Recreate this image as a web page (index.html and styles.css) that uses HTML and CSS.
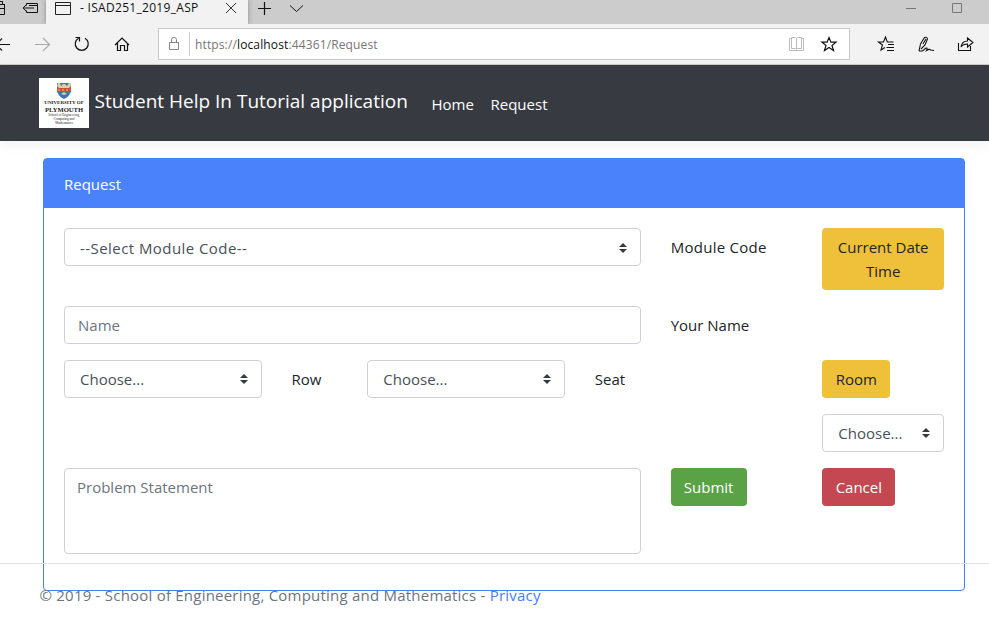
FILE: index.html
```
<!DOCTYPE html>
<html lang="en">
<head>
<meta charset="utf-8">
<title>- ISAD251_2019_ASP</title>
<link rel="stylesheet" href="styles.css">
</head>
<body>
<div class="tabs">
  <svg class="tabs-left" width="46" height="24" fill="none" stroke="#111"><path d="M0 4.500H5M4.500 4V14.500H0M0 8.500H4M0 1.500H2.500V4"/><path d="M26.500 5.500V3.500H37.500V12.500H26.500V10.500M29 5.500H37M34 8H23M26 5L23 8L26 11"/></svg>
  <div class="tab">
    <svg width="16" height="14" fill="none" stroke="#222"><path d="M.5 1.500H15.500V13.500H.5ZM.5 4.500H15.500"/></svg>
    <span class="tab-title">- ISAD251_2019_ASP</span>
    <svg class="tab-close" width="12" height="12" fill="none" stroke="#333"><path d="M1 1L11 11M11 1L1 11"/></svg>
  </div>
  <svg class="tabs-add" width="60" height="24" fill="none" stroke="#111"><path d="M10 8.500H23M16.500 2V15" stroke-width="1.200"/><path d="M42 5.500L48.500 11.500L55 5.500"/></svg>
  <svg class="window" width="88" height="24" fill="none" stroke="#777"><path d="M5 8.500H15M51.500 3.500H60.500V12.500H51.500Z"/></svg>
</div>
<div class="toolbar">
  <svg class="tool-left" width="158" height="40" fill="none" stroke="#111" stroke-width="1.200">
    <path d="M-4 20.500H10M-4 20.500L2 14.500M-4 20.500L2 26.500"/>
    <path stroke="#aaa" d="M35 20.500H49M43 14L49.500 20.500L43 27"/>
    <path d="M85 14.200A6.500 6.500 0 1 1 78.500 14.200M75.500 13.500H79.500V17.500"/>
    <path d="M115 21L122 14L129 21M117.500 19V26.500H120.500V21.500H124.500V26.500H127.500V19"/>
  </svg>
  <div class="address">
    <svg width="12" height="16" fill="none" stroke="#888"><path d="M1.500 6.500H10.500V13.500H1.500ZM3.500 6V3.500Q3.500 1.500 6 1.500Q8.500 1.500 8.500 3.500V6"/></svg>
    <span class="url">https://<b>localhost</b>:44361/Request</span>
    <svg width="51" height="20" fill="none"><path stroke="#bbb" d="M3 4.500H1.500V16.500H15.500V4.500H14M3.500 3.500H7.500L8.500 4.500L9.500 3.500H13.500V14.500H9.500L8.500 15.500L7.500 14.500H3.500ZM8.500 4V15"/><path stroke="#111" stroke-width="1.200" d="M41 3.500L42.900 8.200H48L44 11.500L45.500 16.500L41 13.500L36.500 16.500L38 11.500L34 8.200H39.100Z"/></svg>
  </div>
  <svg class="tool-right" width="139" height="40" fill="none" stroke="#111" stroke-width="1.100">
    <path d="M35 23.500L31 26L32.500 21L28.500 18H33.500L35.500 13L37.300 18H43.500M38 20.500H44M36.500 23.500H44M37 26.500H44"/>
    <path d="M69 27L70.500 20L74.500 13.500Q77 12.500 77.500 15L75 21L71 25M73 20L76 15M69 27H72.500L76 24Q78 23.500 76.500 26.500Q79.500 24.500 80.500 26L84 26.500"/>
    <path d="M108.500 19V26.500H120.500V22M111 23Q112 17 117.500 17V14L123 18.500L117.500 23V20Q113 20 111 23Z"/>
  </svg>
</div>
<header class="navbar">
  <div class="logo">
    <svg width="14" height="17"><path fill="#3b73b8" d="M0 1H14V9Q13 14 7 17Q1 14 0 9Z"/><path fill="#e3cf8c" d="M1 1H3L4 4L6 2H8L10 4L12 1H14V4L12 6H2L0 4Z"/><path fill="#cf4b45" d="M0 6H14V10H0Z"/><path stroke="#f0c75e" stroke-dasharray="2 2" d="M1 8H13"/><path fill="#e3cf8c" d="M4 12L7 10L10 12L7 13Z"/></svg>
    <span class="logo-a">UNIVERSITY OF</span>
    <span class="logo-b">PLYMOUTH</span>
    <span class="logo-c">School of Engineering,<br>Computing and<br>Mathematics</span>
  </div>
  <a class="brand">Student Help In Tutorial application</a>
  <a class="nav-home">Home</a>
  <a class="nav-request">Request</a>
</header>
<main class="card">
  <div class="card-header"><span>Request</span></div>
  <div class="form">
    <div class="control select wide s8"><span>--Select Module Code--</span><svg class="arrows" width="8" height="10"><path d="M0 4L4 0L8 4ZM0 6L4 10L8 6Z"/></svg></div>
    <label class="s2"><span class="t-module">Module Code</span></label>
    <button class="btn yellow s2 full"><span>Current Date<br>Time</span></button>
    <div class="control name s8"><span>Name</span></div>
    <label class="s4"><span>Your Name</span></label>
    <div class="control select s3"><span>Choose...</span><svg class="arrows" width="8" height="10"><path d="M0 4L4 0L8 4ZM0 6L4 10L8 6Z"/></svg></div>
    <label>Row</label>
    <div class="control select s3"><span>Choose...</span><svg class="arrows" width="8" height="10"><path d="M0 4L4 0L8 4ZM0 6L4 10L8 6Z"/></svg></div>
    <label class="s3">Seat</label>
    <button class="btn yellow s2 room">Room</button>
    <div class="control select last s2"><span>Choose...</span><svg class="arrows" width="8" height="10"><path d="M0 4L4 0L8 4ZM0 6L4 10L8 6Z"/></svg></div>
    <div class="control area s8"><span>Problem Statement</span></div>
    <button class="btn green s2 submit">Submit</button>
    <button class="btn red s2 cancel">Cancel</button>
  </div>
</main>
<footer class="footer"><span>© 2019 - School of Engineering, Computing and Mathematics - <a>Privacy</a></span></footer>
</body>
</html>
```
FILE: styles.css
```
* { box-sizing: border-box; }
body { margin: 0; height: 617px; overflow: hidden; background: #fff; color: #212529; font: 15px/24px "Open Sans", "Noto Sans", sans-serif; }
svg { display: block; flex: none; }
.tabs { display: flex; height: 24px; background: #ccc; }
.tab { display: flex; align-items: center; width: 202px; height: 24px; padding: 0 11px 8px 9px; background: #f2f2f2; box-shadow: 0 0 5px #888; clip-path: inset(0 -6px 0 -6px); color: #111; font-size: 12px; }
.tab-title { margin-left: 9px; letter-spacing: .3px; white-space: nowrap; }
.tab-close { margin-left: auto; }
.window { margin-left: auto; }
.toolbar { display: flex; align-items: center; height: 41px; background: #f2f2f2; border-bottom: 1px solid #ccc; }
.address { display: flex; align-items: center; width: 692px; height: 32px; padding: 0 10px 0 9px; border: 1px solid #c8c8c8; background: #fff; }
.url { flex: 1; height: 24px; margin-left: 9px; padding: 1px 0 0 5px; border-left: 1px solid #ccc; color: #767676; font-size: 12px; letter-spacing: .13px; }
.url b { font-weight: 400; color: #111; }
.navbar { display: flex; align-items: center; height: 76px; padding-left: 39px; background: #373a41; color: #fff; box-shadow: 0 4px 12px rgba(0,0,0,.06); white-space: nowrap; }
.logo { display: flex; flex-direction: column; align-items: center; width: 50px; height: 50px; padding-top: 4px; background: #fff; color: #222; font-family: "Liberation Serif", serif; text-align: center; }
.logo-a { margin-top: 1px; font-size: 5px; line-height: 6px; font-weight: 700; }
.logo-b { font-size: 6.6px; line-height: 7px; font-weight: 700; }
.logo-c { margin-top: 0; font-size: 3.4px; line-height: 4px; }
.brand { width: 337px; margin: -4px 0 0 5.5px; font-size: 19px; }
.nav-home, .nav-request { margin-top: 2px; }
.nav-home { width: 59px; }
.card { width: 922px; height: 433px; margin: 17px 0 0 43px; border: 1px solid #4680f8; border-radius: 4px; }
.card-header { height: 49px; padding: 13px 20px; background: #4982fb; color: #fff; }
.form { display: grid; grid-template-columns: repeat(12, minmax(0, 1fr)); gap: 16px 30px; padding: 20px; align-items: start; }
.s2 { grid-column: span 2; }
.s3 { grid-column: span 3; }
.s4 { grid-column: span 4; }
.s8 { grid-column: span 8; }
.last { grid-column: 11 / span 2; }
label { padding-top: 7px; white-space: nowrap; }
.t-module { letter-spacing: .27px; }
.control { display: flex; align-items: center; height: 38px; padding: 0 13px; border: 1px solid #ced0da; border-radius: 4px; color: #6c757d; white-space: nowrap; }
.select { justify-content: space-between; padding: 0 12.5px 0 15px; color: #495057; }
.wide { padding-top: 2px; letter-spacing: .44px; }
.arrows { margin-top: -1px; fill: #343a40; }
.area { height: 86px; align-items: flex-start; padding: 6px 12px; }
.btn { justify-self: start; min-height: 38px; padding: 7px 12px; border: 0; border-radius: 4px; color: #fff; font: inherit; white-space: nowrap; }
.full { width: 100%; }
.yellow { background: #efc13b; color: #212529; }
.green { background: #5aa246; }
.red { background: #c44851; }
.room { width: 68px; }
.submit { width: 76px; }
.cancel { width: 73px; }
.footer { position: relative; margin-top: -28px; height: 54px; padding: 19px 0 0 39.500px; border-top: 1px solid #dee2e6; color: #6c757d; letter-spacing: .22px; white-space: nowrap; }
.footer a { color: #4680f8; }
```
